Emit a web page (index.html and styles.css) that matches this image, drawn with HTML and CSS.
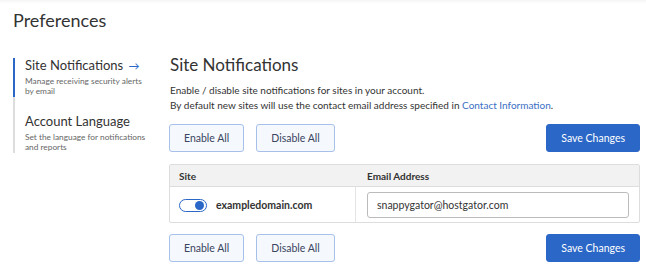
FILE: index.html
```html
<!DOCTYPE html>
<html lang="en">
<head>
    <meta charset="UTF-8">
    <title>Preferences</title>
    <link rel="stylesheet" href="styles.css">
</head>
<body>
    <header class="page-head">
        <h1>Preferences</h1>
    </header>

    <div class="layout">
        <nav class="side">
            <a class="side-item active" href="#">
                <span class="side-title">Site Notifications <span class="arrow">&rarr;</span></span>
                <span class="side-desc">Manage receiving security alerts by email</span>
            </a>
            <a class="side-item" href="#">
                <span class="side-title">Account Language</span>
                <span class="side-desc">Set the language for notifications and reports</span>
            </a>
        </nav>

        <main class="content">
            <h2>Site Notifications</h2>
            <p class="intro">
                Enable / disable site notifications for sites in your account.<br>
                By default new sites will use the contact email address specified in <a href="#">Contact Information</a>.
            </p>

            <div class="actions">
                <button class="btn btn-light">Enable All</button>
                <button class="btn btn-light">Disable All</button>
                <button class="btn btn-primary">Save Changes</button>
            </div>

            <div class="sites">
                <div class="sites-row sites-head">
                    <div class="cell">Site</div>
                    <div class="cell">Email Address</div>
                </div>
                <div class="sites-row">
                    <div class="cell site-cell">
                        <span class="toggle on"><span class="knob"></span></span>
                        <span class="domain">exampledomain.com</span>
                    </div>
                    <div class="cell">
                        <input type="text" class="email" value="snappygator@hostgator.com">
                    </div>
                </div>
            </div>

            <div class="actions">
                <button class="btn btn-light">Enable All</button>
                <button class="btn btn-light">Disable All</button>
                <button class="btn btn-primary">Save Changes</button>
            </div>
        </main>
    </div>
</body>
</html>
```

FILE: styles.css
```css
body {
    margin: 0;
    font-family: "Lato", "Open Sans", sans-serif;
    color: #333;
    background: #fff;
}
.page-head {
    padding: 8px 13px 0;
    height: 58px;
    box-sizing: border-box;
    background: linear-gradient(#f5f5f5, #fff 4px);
}
.page-head h1 {
    margin: 0;
    font-size: 18px;
    font-weight: 400;
    line-height: 24px;
    color: #333;
}
.layout {
    display: flex;
    padding-left: 13px;
}
.side {
    width: 135px;
    flex-shrink: 0;
    display: flex;
    flex-direction: column;
}
.side-item {
    display: flex;
    flex-direction: column;
    border-left: 2px solid #ddd;
    padding: 17px 0 1px 10px;
    text-decoration: none;
    color: #333;
}
.side-item.active {
    border-left-color: #2b67c6;
    padding-top: 0;
}
.side-title {
    font-size: 13px;
    line-height: 14px;
}
.arrow {
    color: #2b67c6;
    font-size: 11px;
    margin-left: 2px;
}
.side-desc {
    font-size: 8.3px;
    line-height: 10px;
    color: #666;
    margin-top: 3px;
}
.side-item + .side-item .side-desc {
    margin-top: 4px;
}
.content {
    flex: 1;
    margin-left: 21px;
    margin-right: 6px;
    margin-top: -5px;
}
.content h2 {
    margin: 0 0 0 1px;
    font-size: 17px;
    font-weight: 400;
    line-height: 24px;
}
.intro {
    margin: 6px 0 0 1px;
    font-size: 10px;
    line-height: 15px;
    color: #333;
}
.intro a {
    color: #3a6fc4;
    text-decoration: none;
}
.actions {
    display: flex;
    gap: 12px;
    margin-top: 11px;
}
.actions .btn-primary {
    margin-left: auto;
}
.btn {
    font-family: inherit;
    font-size: 10.5px;
    height: 28px;
    border-radius: 3px;
    padding: 0 14px;
    cursor: pointer;
}
.btn-light {
    background: #f5f8fd;
    border: 1px solid #a6c0ea;
    color: #3a4560;
}
.btn-primary {
    background: #2b67c6;
    border: 1px solid #2b67c6;
    color: #fff;
    padding: 0 14px;
}
.sites {
    margin-top: 12px;
    border: 1px solid #ddd;
    border-radius: 2px;
}
.sites-row {
    display: grid;
    grid-template-columns: 186px 1fr;
}
.sites-head {
    background: #f2f2f2;
    border-bottom: 1px solid #ddd;
    font-size: 10px;
    font-weight: 700;
    height: 21px;
    align-items: center;
}
.sites-head .cell {
    padding-left: 9px;
}
.sites-head .cell + .cell {
    padding-left: 10px;
}
.site-cell {
    display: flex;
    align-items: center;
    gap: 9px;
    padding-left: 9px;
    border-right: 1px solid #e4e4e4;
}
.sites-row .cell + .cell {
    padding: 5px 10px 4px 11px;
}
.toggle {
    width: 22px;
    height: 11px;
    border: 1.5px solid #2b67c6;
    border-radius: 8px;
    display: flex;
    align-items: center;
    justify-content: flex-end;
    padding: 0 2px;
    margin-top: 2px;
}
.knob {
    width: 9px;
    height: 9px;
    border-radius: 50%;
    background: #2b67c6;
}
.domain {
    font-size: 10.5px;
    font-weight: 700;
    color: #333;
}
.email {
    display: block;
    width: 100%;
    box-sizing: border-box;
    height: 26px;
    border: 1px solid #bbb;
    border-radius: 3px;
    padding: 0 9px;
    font-family: inherit;
    font-size: 10.5px;
    color: #333;
}
```
